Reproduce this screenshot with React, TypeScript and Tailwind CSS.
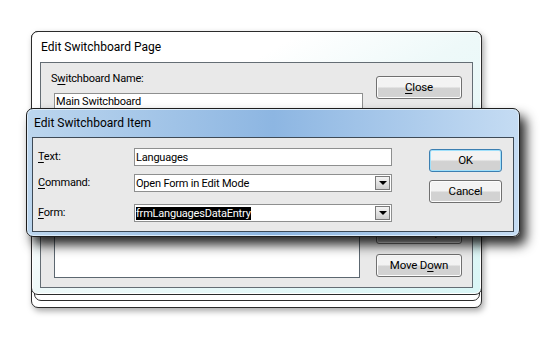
import type { ReactNode } from "react";

const font = { fontFamily: 'Roboto, "Noto Sans", "Liberation Sans", sans-serif' };

function Key({ children }: { children: ReactNode }) {
  return <span className="underline underline-offset-2">{children}</span>;
}

function Button({ children, primary }: { children: ReactNode; primary?: boolean }) {
  return (
    <div
      className={
        "flex h-[23px] items-center justify-center rounded-[3px] border bg-gradient-to-b from-[#f3f3f3] from-45% to-[#d2d2d2] to-55% text-[11.5px] tracking-[-0.2px] text-black " +
        (primary
          ? "border-[#3c7fb1] shadow-[inset_0_0_0_1px_#9fe0fb]"
          : "border-[#707070] shadow-[inset_0_0_0_1px_#fcfcfc]")
      }
    >
      {children}
    </div>
  );
}

function Field({ children, dropdown }: { children?: ReactNode; dropdown?: boolean }) {
  return (
    <div className="flex h-[18px] items-center border border-[#8e8f8f] bg-white pl-px text-[11px] tracking-[-0.2px] text-black">
      <div className="flex-1 truncate leading-[15px]">{children}</div>
      {dropdown ? (
        <div className="mr-px flex h-[14px] w-[15px] items-center justify-center border border-[#7a7a7a] bg-gradient-to-b from-[#f4f4f4] to-[#cfcfcf]">
          <div className="h-0 w-0 border-x-[4px] border-t-[4px] border-x-transparent border-t-black" />
        </div>
      ) : null}
    </div>
  );
}

export default function App() {
  return (
    <div className="relative h-[340px] w-[554px] overflow-hidden bg-white" style={font}>
      {/* stacked back frames */}
      <div className="absolute left-[31px] top-[31px] h-[277px] w-[451px] rounded-[7px] border border-[#2b2b2b] bg-white shadow-[2px_3px_6px_rgba(0,0,0,0.35)]" />
      <div className="absolute left-[34px] top-[31px] h-[270px] w-[446px] rounded-[7px] border border-[#2b2b2b] bg-white" />

      {/* Edit Switchboard Page */}
      <div className="absolute left-[31px] top-[31px] flex h-[264px] w-[451px] flex-col rounded-[7px] border border-[#2b2b2b] bg-gradient-to-br from-white from-30% via-[#eef9f9] to-[#d9f6f6] px-[8px] pb-[6px] shadow-[inset_0_0_0_1px_#ffffff]">
        <div className="flex h-[30px] items-center pl-px text-[12px] text-black">Edit Switchboard Page</div>
        <div className="relative flex flex-1 border border-[#646d74] bg-[#e9e9e9]">
          <div className="flex w-[322px] flex-col pl-[10px] pt-[8px]">
            <div className="text-[11px] tracking-[-0.2px] text-black">
              S<Key>w</Key>itchboard Name:
            </div>
            <div className="mt-[5px] ml-[3px] w-[309px]">
              <Field>Main Switchboard</Field>
            </div>
            <div className="mt-auto mb-[9px] ml-[3px] h-[120px] w-[306px] border border-[#5c6770] bg-white" />
          </div>
          <div className="ml-[13px] flex flex-col pt-[13px] w-[86px]">
            <Button>
              <Key>C</Key>lose
            </Button>
            <div className="mt-auto flex flex-col gap-[10px] pb-[10px]">
              <Button>Move Up</Button>
              <Button>
                Move D<Key>o</Key>wn
              </Button>
            </div>
          </div>
        </div>
      </div>

      {/* Edit Switchboard Item */}
      <div className="absolute left-[26px] top-[108px] flex h-[129px] w-[494px] flex-col rounded-[7px] border border-[#1e1e1e] bg-gradient-to-r from-[#bcd6ee] via-[#8db6e2] to-[#c5dcf3] px-[5px] pb-[4px] shadow-[6px_8px_12px_rgba(0,0,0,0.85),inset_0_0_0_1px_#dcecfa]">
        <div className="flex h-[28px] items-center pl-[2px] text-[12px] text-black">Edit Switchboard Item</div>
        <div className="flex flex-1 border border-[#3e4a56] bg-[#e9e9e9]">
          <div className="flex w-[360px] flex-col gap-[8px] pl-[5px] pt-[10px] text-[11px] tracking-[-0.2px] text-black">
            <div className="flex items-center">
              <div className="w-[96px]">
                <Key>T</Key>ext:
              </div>
              <div className="w-[258px]">
                <Field>Languages</Field>
              </div>
            </div>
            <div className="flex items-center">
              <div className="w-[96px]">
                <Key>C</Key>ommand:
              </div>
              <div className="w-[258px]">
                <Field dropdown>Open Form in Edit Mode</Field>
              </div>
            </div>
            <div className="mt-[4px] flex items-center">
              <div className="w-[96px]">
                <Key>F</Key>orm:
              </div>
              <div className="w-[258px]">
                <Field dropdown>
                  <span className="bg-black text-white">frmLanguagesDataEntry</span>
                </Field>
              </div>
            </div>
          </div>
          <div className="ml-[36px] flex w-[73px] flex-col gap-[8px] pt-[11px]">
            <Button primary>OK</Button>
            <Button>Cancel</Button>
          </div>
        </div>
      </div>
    </div>
  );
}
